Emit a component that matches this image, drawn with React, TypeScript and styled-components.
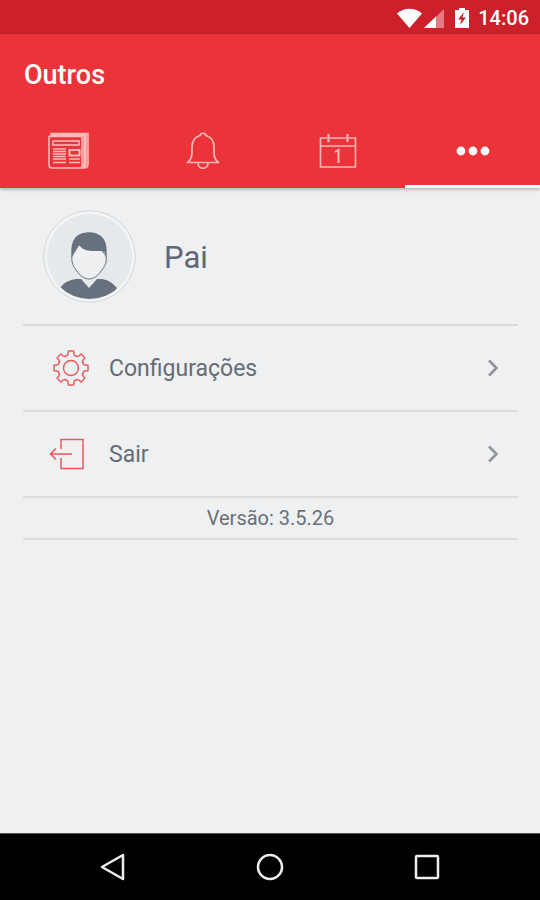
import React from "react";
import styled, { createGlobalStyle } from "styled-components";

const GlobalStyle = createGlobalStyle`
  *, *::before, *::after { box-sizing: border-box; }
  body { margin: 0; background: #eef0f2; font-family: Roboto, "Noto Sans", sans-serif; }
`;

const Screen = styled.div`
  display: flex;
  flex-direction: column;
  min-height: 100vh;
  background: #eef0f2;
  color: #626a75;
`;

const StatusBar = styled.div`
  display: flex;
  align-items: center;
  justify-content: flex-end;
  height: 34px;
  padding: 2px 11px 0 0;
  background: #cc202a;
  color: #fff;
  font-size: 20px;
  font-weight: 500;
  line-height: 24px;
`;

const StatusIcons = styled.svg`
  display: block;
  margin-right: 8px;
`;

const Header = styled.header`
  background: #eb3439;
  box-shadow: 0 1px 4px rgba(0, 0, 0, 0.35);
`;

const Title = styled.h1`
  margin: 0;
  padding: 24px 24px 0;
  color: #fff;
  font-size: 27px;
  font-weight: 500;
  line-height: 34px;
`;

const Tabs = styled.nav`
  display: grid;
  grid-template-columns: repeat(4, 1fr);
  margin-top: 22px;
`;

const Tab = styled.button<{ $active?: boolean }>`
  display: flex;
  align-items: center;
  justify-content: center;
  height: 74px;
  padding: 3px 0 0;
  border: 0;
  border-bottom: 3px solid ${(p) => (p.$active ? "#fff" : "#eb3439")};
  background: none;
  color: ${(p) => (p.$active ? "#fff" : "#ffb9bb")};
  cursor: pointer;
`;

const Content = styled.main`
  flex: 1;
  padding: 0 22px 0 23px;
`;

const Profile = styled.section`
  display: flex;
  align-items: center;
  gap: 28px;
  height: 138px;
  padding: 0 20px;
  border-bottom: 2px solid #d6d8da;
`;

const Name = styled.h2`
  margin: 4px 0 0;
  color: #5f6778;
  font-size: 31px;
  font-weight: 400;
  line-height: 40px;
`;

const Row = styled.button`
  display: flex;
  align-items: center;
  width: 100%;
  height: 86px;
  padding: 0 16px 0 26px;
  border: 0;
  border-bottom: 2px solid #dbddde;
  background: none;
  color: #656c76;
  font: inherit;
  font-size: 23px;
  line-height: 30px;
  text-align: left;
  cursor: pointer;
`;

const RowLabel = styled.span`
  flex: 1;
  padding: 2px 0 0 18px;
`;

const Version = styled.p`
  margin: 0;
  padding: 6px 0;
  border-bottom: 2px solid #dbddde;
  color: #6b7077;
  font-size: 20px;
  line-height: 28px;
  text-align: center;
`;

const NavBar = styled.nav`
  display: grid;
  grid-template-columns: repeat(3, 1fr);
  align-items: center;
  height: 67px;
  padding: 0 35px;
  border-top: 1px solid #555;
  background: #000;
`;

const NavButton = styled.button`
  display: flex;
  justify-content: center;
  padding: 8px 0;
  border: 0;
  background: none;
  cursor: pointer;
`;

const Avatar = () => (
  <svg width="93" height="93" viewBox="0 0 93 93" role="img" aria-label="Pai">
    <defs>
      <clipPath id="avatar-disc">
        <circle cx="46.500" cy="46.500" r="42.500" />
      </clipPath>
    </defs>
    <circle cx="46.500" cy="46.500" r="45.800" fill="#f2f4f5" stroke="#d3d5d7" />
    <circle cx="46.500" cy="46.500" r="42.500" fill="#e6e9eb" />
    <path
      clipPath="url(#avatar-disc)"
      d="M17 78C22 71 28 70 33 69L38 69L46 78L54 69L59 69C65 70 69 72 74 78L68 90H24Z"
      fill="#67717d"
    />
    <path
      d="M29 46C28 53 31 57 33 60C37 66 42 69 46 69C50 69 55 66 59 60C62 56 64 52 63 46L58 39L36 35Z"
      fill="#edeff1"
      stroke="#67717d"
      strokeWidth="1"
    />
    <path
      d="M28.500 48C28 41 28 33 32 28C37 21 53 20 59 27C64 32 64 40 63.500 48L61.500 42C60 41 58 41 56 41C49 41 41 42 36 35C34 37 33 39 31 42Z"
      fill="#67717d"
    />
  </svg>
);

const GearIcon = () => (
  <svg width="42" height="42" viewBox="-22 -21 42 42" fill="none" stroke="#e9575b" strokeWidth="1.4" aria-hidden="true">
    {[0, 45, 90, 135, 180, 225, 270, 315].map((angle) => (
      <path
        key={angle}
        transform={`rotate(${angle})`}
        strokeLinecap="round"
        strokeLinejoin="round"
        d="M-5.1 -12.300Q-3.200 -11.800 -3 -14L-2.700 -17H2.700L3 -14Q3.200 -11.800 5.100 -12.300"
      />
    ))}
    <circle r="7.500" />
  </svg>
);

const ExitIcon = () => (
  <svg width="42" height="42" viewBox="0 0 42 42" fill="none" stroke="#e9575b" strokeWidth="1.5" aria-hidden="true">
    <path d="M12 16V6.500H34V35.500H12V25M23 21H1.500M7 15.500L1.500 21L7 26.500" />
  </svg>
);

const Chevron = () => (
  <svg width="18" height="20" viewBox="0 0 18 20" fill="none" stroke="#929498" strokeWidth="2.600" aria-hidden="true">
    <path d="M5 2.500L12.500 10L5 17.500" />
  </svg>
);

export default function App() {
  return (
    <Screen>
      <GlobalStyle />
      <StatusBar>
        <StatusIcons width="74" height="24" viewBox="0 0 74 24" aria-hidden="true">
          <path d="M1 7.500C8 1 19 1 26 7.500L13.500 22Z" fill="#fff" />
          <path d="M28 22L48 3V22Z" fill="#e37b80" />
          <path d="M28 22L40 10.500V22Z" fill="#fff" />
          <path d="M59 4H63V2H69V4H73V22H59Z" fill="#fff" />
          <path d="M68 6L62 13.500H65.500L64 19L70 11.500H66.500Z" fill="#cc202a" />
        </StatusIcons>
        <span>14:06</span>
      </StatusBar>
      <Header>
        <Title>Outros</Title>
        <Tabs aria-label="Seções">
          <Tab aria-label="Notícias">
            <svg width="42" height="38" viewBox="0 0 42 38" fill="none" stroke="currentColor" strokeWidth="1.600" aria-hidden="true">
              <path d="M2 4.500H35V36H5Q2 36 2 33ZM4 4V1.500H41V32Q41 36 37 36H34" />
              <path d="M38 2V32Q38 34 36 34" strokeWidth="3.600" />
              <path d="M4 2.700H38" strokeWidth="2.800" />
              <rect x="6" y="9" width="26" height="4" />
              <path d="M6 17H19M6 19.500H19M6 22H19M6 24.500H19M6 27H19M6 30.500H19M22 27H33M22 30.500H33" />
              <rect x="22.500" y="18" width="10" height="5.500" strokeWidth="2" />
            </svg>
          </Tab>
          <Tab aria-label="Notificações">
            <svg width="36" height="38" viewBox="0 0 36 38" fill="none" stroke="currentColor" strokeWidth="1.700" strokeLinejoin="round" aria-hidden="true">
              <path d="M2.500 30.500C6 28 7 25 7 20V15C7 9 10 5 15 3.500C15.500 0.500 20.500 0.500 21 3.500C26 5 29 9 29 15V20C29 25 30 28 33.500 30.500Z" />
              <path d="M13 31C13 38 23 38 23 31" />
            </svg>
          </Tab>
          <Tab aria-label="Calendário">
            <svg width="38" height="36" viewBox="0 0 38 36" fill="none" stroke="currentColor" strokeWidth="1.600" aria-hidden="true">
              <path d="M8 5H1.500V34H36.500V5H30M11 5H27M1.500 13H36.500" />
              <path d="M9.500 1V9M28.500 1V9" strokeWidth="2.200" />
              <path d="M16 19L19.500 17V30" strokeWidth="2" />
            </svg>
          </Tab>
          <Tab $active aria-label="Outros" aria-current="page">
            <svg width="34" height="10" viewBox="0 0 34 10" fill="currentColor" aria-hidden="true">
              <circle cx="5" cy="5" r="4.400" />
              <circle cx="17" cy="5" r="4.400" />
              <circle cx="29" cy="5" r="4.400" />
            </svg>
          </Tab>
        </Tabs>
      </Header>
      <Content>
        <Profile>
          <Avatar />
          <Name>Pai</Name>
        </Profile>
        <Row>
          <GearIcon />
          <RowLabel>Configurações</RowLabel>
          <Chevron />
        </Row>
        <Row>
          <ExitIcon />
          <RowLabel>Sair</RowLabel>
          <Chevron />
        </Row>
        <Version>Versão: 3.5.26</Version>
      </Content>
      <NavBar aria-label="Sistema">
        <NavButton aria-label="Voltar">
          <svg width="28" height="28" viewBox="0 0 28 28" fill="none" stroke="#eee" strokeWidth="2.500" strokeLinejoin="round">
            <path d="M3 14L24 2V26Z" />
          </svg>
        </NavButton>
        <NavButton aria-label="Início">
          <svg width="28" height="28" viewBox="0 0 28 28" fill="none" stroke="#eee" strokeWidth="2.500">
            <circle cx="14" cy="14" r="12" />
          </svg>
        </NavButton>
        <NavButton aria-label="Recentes">
          <svg width="28" height="28" viewBox="0 0 28 28" fill="none" stroke="#eee" strokeWidth="2.500">
            <rect x="3" y="3" width="22" height="22" rx="1" />
          </svg>
        </NavButton>
      </NavBar>
    </Screen>
  );
}
